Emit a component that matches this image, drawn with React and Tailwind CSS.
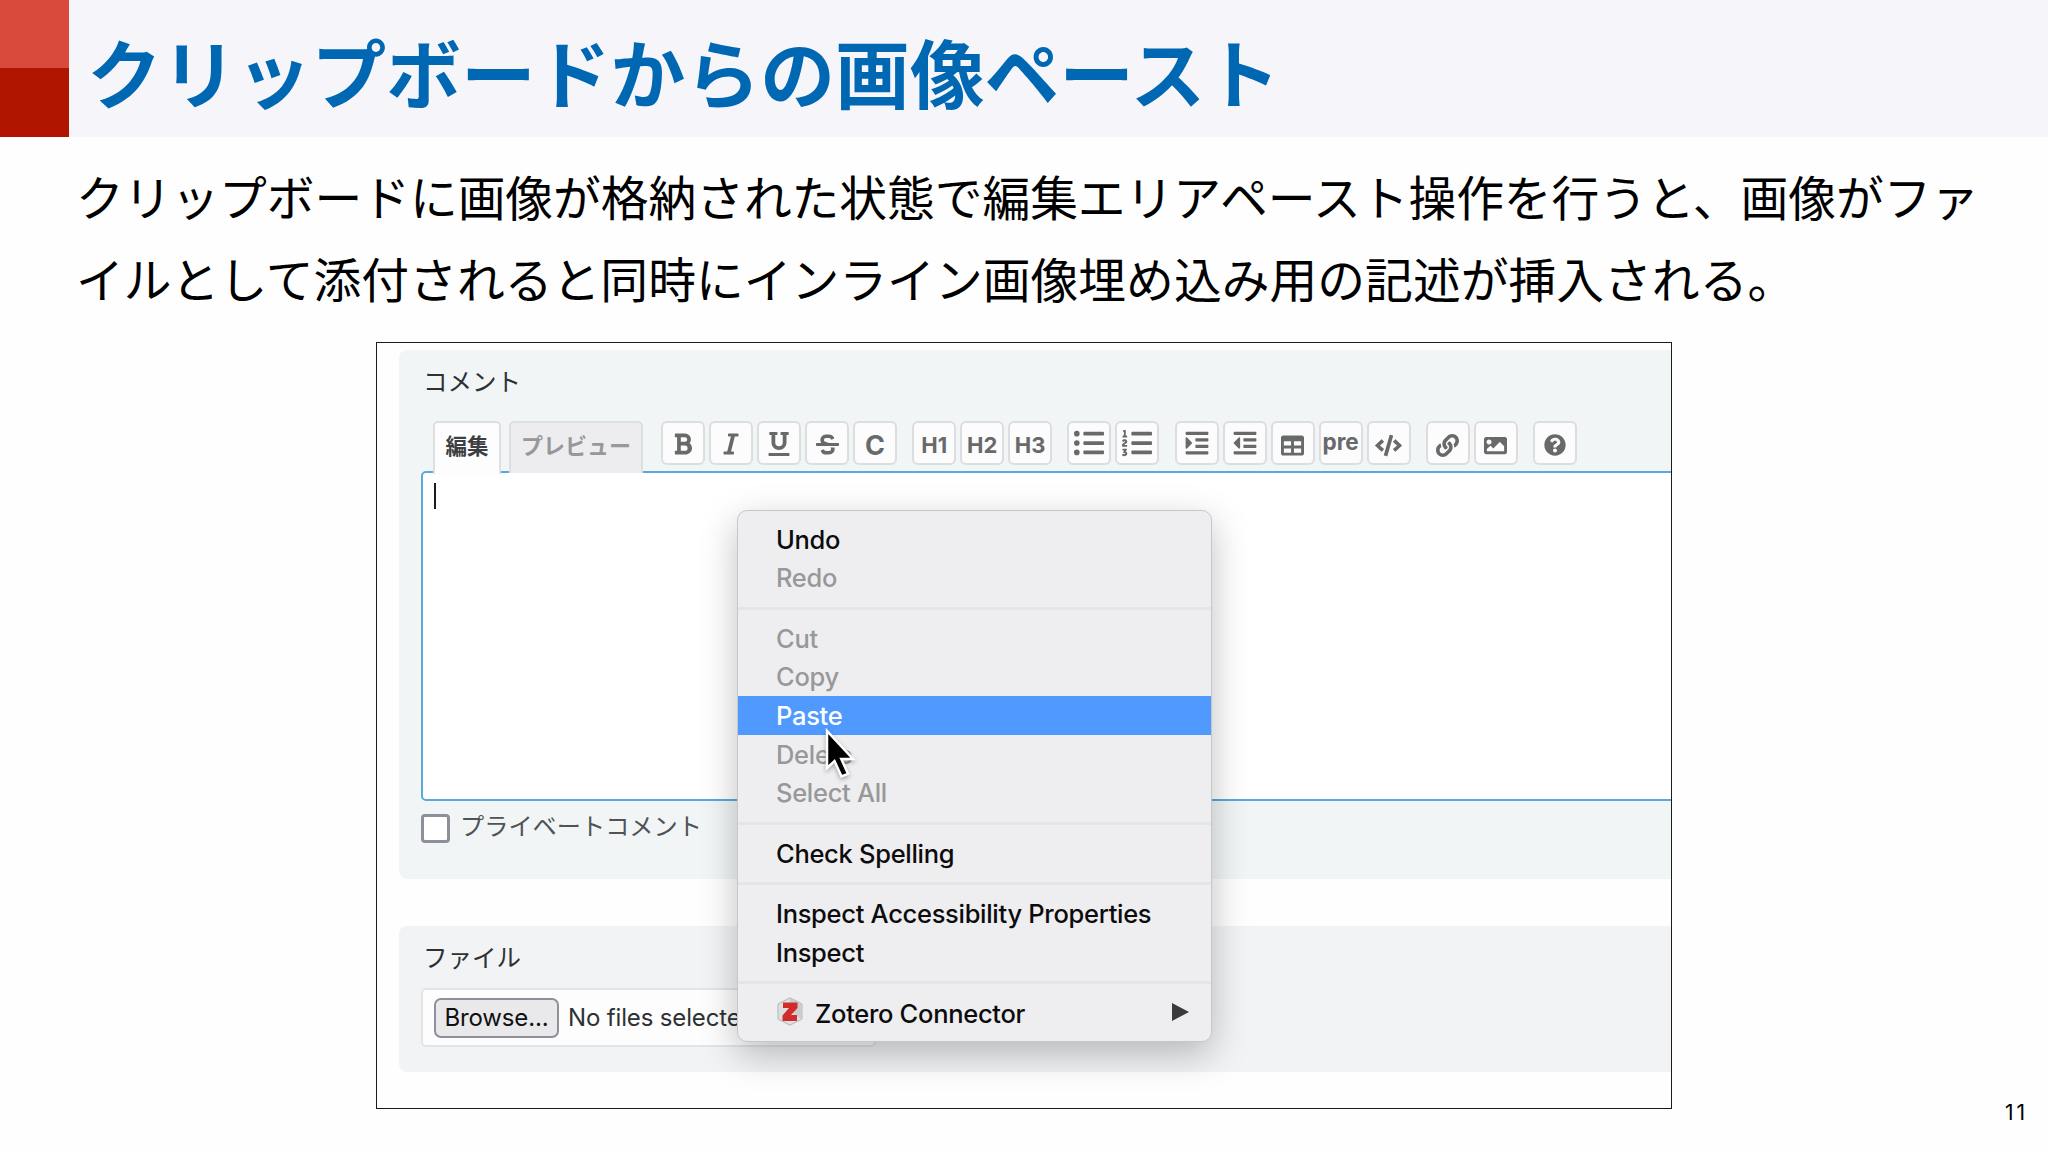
import React from 'react';
import { FaBold, FaItalic, FaUnderline, FaStrikethrough, FaListUl, FaListOl, FaIndent, FaOutdent, FaTable, FaCode, FaLink, FaImage, FaQuestionCircle } from 'react-icons/fa';

const TOOLBAR = [
  [
    { id: 'bold', icon: <FaBold size={24} className="mt-0.5" /> },
    { id: 'italic', icon: <FaItalic size={24} className="mt-0.5" /> },
    { id: 'underline', icon: <FaUnderline size={24} className="mt-0.5" /> },
    { id: 'strike', icon: <FaStrikethrough size={23} className="mt-0.5" /> },
    { id: 'code', icon: <span className="text-[27px] pt-1">C</span> },
  ],
  [
    { id: 'h1', icon: <span className="text-[22px] pt-1">H1</span> },
    { id: 'h2', icon: <span className="text-[22px] pt-1">H2</span> },
    { id: 'h3', icon: <span className="text-[22px] pt-1">H3</span> },
  ],
  [
    { id: 'ul', icon: <FaListUl size={30} /> },
    { id: 'ol', icon: <FaListOl size={30} /> },
  ],
  [
    { id: 'indent', icon: <FaIndent size={26} /> },
    { id: 'outdent', icon: <FaOutdent size={26} /> },
    { id: 'table', icon: <FaTable size={23} className="mt-1" /> },
    { id: 'pre', icon: <span className="text-[22.500px] pb-0.5">pre</span> },
    { id: 'codeblock', icon: <FaCode size={27} className="mt-1" /> },
  ],
  [
    { id: 'link', icon: <FaLink size={23} className="mt-1" /> },
    { id: 'image', icon: <FaImage size={23} className="mt-1" /> },
  ],
  [{ id: 'help', icon: <FaQuestionCircle size={22} className="mt-1" /> }],
];

const MENU = [
  [{ label: 'Undo' }, { label: 'Redo', disabled: true }],
  [
    { label: 'Cut', disabled: true },
    { label: 'Copy', disabled: true },
    { label: 'Paste', active: true },
    { label: 'Delete', disabled: true },
    { label: 'Select All', disabled: true },
  ],
  [{ label: 'Check Spelling' }],
  [{ label: 'Inspect Accessibility Properties' }, { label: 'Inspect' }],
  [{ label: 'Zotero Connector', zotero: true }],
];

function itemColor(item) {
  if (item.active) return 'bg-[#509aff] text-white';
  if (item.disabled) return 'text-[#98989a]';
  return 'text-[#0c0c0d]';
}

function ZoteroIcon() {
  return (
    <svg width="26" height="29" viewBox="0 0 26 29" className="ml-px mr-3 -mt-1">
      <path d="M13 .8 25 7v15l-12 6.200L1 22V7z" fill="#dedfe0" stroke="#b3b5b7" strokeWidth="1" />
      <path d="M13 1.500 24.500 7.300v14.400L13 14z" fill="#cacccd" />
      <path d="M6 5.500h14.500v5.500l-6.500 7h6v6H5.500V18.500l6.500-7.500H6z" fill="#d12c29" />
    </svg>
  );
}

function ContextMenu() {
  return (
    <div className="absolute left-[360px] top-[167px] w-[475px] h-[532px] pt-[9px] rounded-[10px] border border-[#c6c7c9] bg-[#eeeef0] shadow-[0_12px_36px_rgba(0,0,0,0.25)] font-['Inter',sans-serif] font-[450] text-[25.500px] tracking-[-0.300px]">
      {MENU.map((group, i) => (
        <div key={i}>
          {i > 0 && <div className="h-[22px] py-[9.500px]"><div className="h-[3px] bg-[#e4e5e7]" /></div>}
          {group.map((item) => (
            <div key={item.label} className={`h-[38.600px] pt-px pl-[38px] pr-[22px] flex items-center whitespace-nowrap ${itemColor(item)}`}>
              {item.zotero && <ZoteroIcon />}
              <span>{item.label}</span>
              {item.zotero && (
                <svg width="17" height="18" viewBox="0 0 17 18" className="ml-auto -mt-1"><path d="M0 0 17 9 0 18z" fill="#3a3a3c" /></svg>
              )}
            </div>
          ))}
        </div>
      ))}
      <svg width="36" height="56" viewBox="0 0 36 56" className="absolute left-[85px] top-[216px] drop-shadow-[0_2px_2px_rgba(0,0,0,0.3)]">
        <path d="M4 4v37l7.500-7 7 15.500 6.500-2.700-6.700-14.800H30z" fill="#000" stroke="#fff" strokeWidth="2.500" />
      </svg>
    </div>
  );
}

export default function App() {
  return (
    <div className="w-[2048px] h-[1152px] overflow-hidden relative bg-[#fefefe] text-black font-['Noto_Sans_CJK_JP',sans-serif]">
      <header className="flex h-[137px] bg-[#f5f5fa]">
        <div className="w-[69px] flex flex-col">
          <div className="h-[68px] bg-[#d94a3c]" />
          <div className="flex-1 bg-[#b01500]" />
        </div>
        <h1 className="pl-[18px] text-[74.800px] leading-[141px] font-bold text-[#0068b3] whitespace-nowrap">クリップボードからの画像ペースト</h1>
      </header>

      <div className="pl-[76px] pt-[18px] h-[205px] text-[47.800px] leading-[82px] whitespace-nowrap">
        <p className="tracking-[-0.090px]">クリップボードに画像が格納された状態で編集エリアペースト操作を行うと、画像がファ</p>
        <p>イルとして添付されると同時にインライン画像埋め込み用の記述が挿入される。</p>
      </div>

      <div className="relative ml-[376px] w-[1296px] h-[767px] border-[1.500px] border-[#1c1c1e] bg-[#fefefe]">
        <div className="h-full overflow-hidden pl-[22px] pt-[7px]">
          <section className="h-[529px] rounded-l-[8px] bg-[#f1f5f6] pl-[22px] pt-[14px]">
            <div className="h-[57px] pl-0.5 text-[24.500px] leading-[33px] text-[#2e3134]">コメント</div>
            <div className="flex h-[50px] pl-3 relative">
              <div className="w-[68px] h-[53px] border-2 border-b-0 border-[#dddfe2] rounded-t-[5px] bg-[#fdfdfe] text-[21.500px] leading-[44px] font-bold text-center text-[#3d3f42]">編集</div>
              <div className="ml-2 w-[134px] h-[52px] border-2 border-b-0 border-[#dddfe2] rounded-t-[5px] bg-[#ededef] text-[22px] leading-[43px] font-bold text-center text-[#97989a]">プレビュー</div>
              <div className="flex gap-[15.200px] ml-[18px]">
                {TOOLBAR.map((group, i) => (
                  <div key={i} className="flex gap-1">
                    {group.map((b) => (
                      <button key={b.id} className="w-11 h-11 flex items-center justify-center rounded-[6px] border-2 border-[#dcdde0] bg-[#fcfcfd] text-[#68696b] font-['Inter',sans-serif] font-bold leading-none">
                        {b.icon}
                      </button>
                    ))}
                  </div>
                ))}
              </div>
            </div>
            <div className="w-[1300px] h-[330px] rounded-[5px] border-2 border-[#5ba8db] bg-white pl-[11px] pt-[10px]">
              <div className="w-0.5 h-[26px] bg-[#1c1c1e]" />
            </div>
            <div className="flex items-start pt-[13px]">
              <div className="w-[29px] h-[29px] rounded-[4px] border-[3px] border-[#8f8f9b] bg-white" />
              <span className="ml-[10px] -mt-[6px] text-[24.200px] leading-[34px] text-[#505356]">プライベートコメント</span>
            </div>
          </section>

          <section className="mt-[47px] h-[146px] rounded-l-[8px] bg-[#f1f3f5] pl-[22px] pt-[14px]">
            <div className="h-[48px] pl-0.5 text-[24.500px] leading-[33px] text-[#2e3134]">ファイル</div>
            <div className="flex items-center w-[455px] h-[59px] pl-[11px] rounded-[5px] border-2 border-[#e2e4e7] bg-[#fdfdfe] font-['Inter',sans-serif] text-[24px] tracking-[-0.150px] whitespace-nowrap">
              <div className="w-[125px] h-10 pt-px flex items-center justify-center rounded-[7px] border-2 border-[#8f8f9b] bg-[#e9e9ec] text-[#111]">Browse...</div>
              <span className="ml-[9px] pt-px text-[#2e3134]">No files selected.</span>
            </div>
          </section>
        </div>
        <ContextMenu />
      </div>

      <div className="absolute right-[20px] top-[1099px] font-['Inter',sans-serif] text-[21px] leading-[28px] tracking-[3px]">11</div>
    </div>
  );
}
